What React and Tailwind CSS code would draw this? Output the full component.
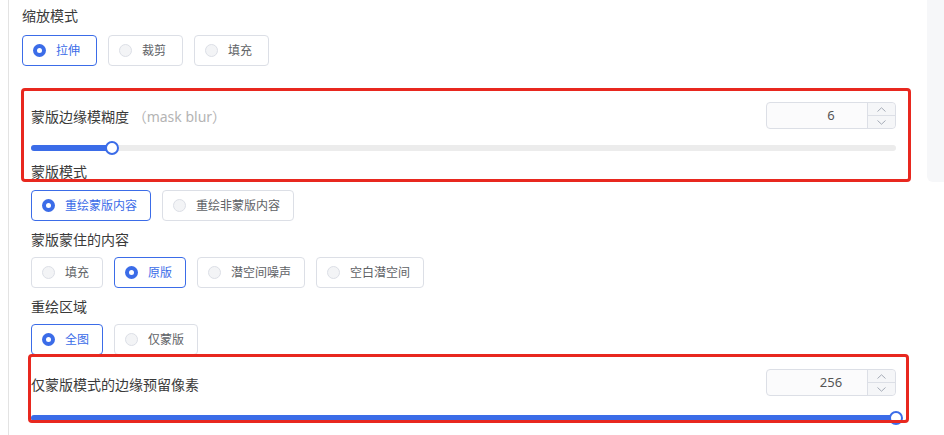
import React from "react";

const GROUPS = [
  { label: "蒙版模式", options: ["重绘蒙版内容", "重绘非蒙版内容"], selected: 0 },
  { label: "蒙版蒙住的内容", options: ["填充", "原版", "潜空间噪声", "空白潜空间"], selected: 1 },
  { label: "重绘区域", options: ["全图", "仅蒙版"], selected: 0 },
];

function RadioButton({ text, checked, wide }) {
  return (
    <div
      className={`h-[31px] flex items-center pl-[10px] gap-[10px] rounded-[4px] border ${
        wide ? "pr-[16px]" : "pr-[13px]"
      } ${checked ? "border-[#3b6ce8]" : "border-[#dcdfe6]"}`}
    >
      {checked ? (
        <span className="w-[13px] h-[13px] rounded-full bg-[#3b6ce8] flex items-center justify-center">
          <span className="w-[5px] h-[5px] rounded-full bg-white" />
        </span>
      ) : (
        <span className="w-[13px] h-[13px] rounded-full border border-[#dcdfe6] bg-[#f3f4f6]" />
      )}
      <span
        className={`text-[12px] leading-[16px] ${checked ? "text-[#3b6ce8]" : "text-[#606266]"}`}
      >
        {text}
      </span>
    </div>
  );
}

function RadioRow({ options, selected, wide }) {
  return (
    <div className="flex gap-[11px]">
      {options.map((opt, i) => (
        <RadioButton key={opt} text={opt} checked={i === selected} wide={wide} />
      ))}
    </div>
  );
}

function Label({ children, className = "" }) {
  return (
    <div className={`h-[20px] text-[14px] leading-[20px] text-[#3a3a3a] ${className}`}>{children}</div>
  );
}

function Chevron({ up }) {
  return (
    <svg width="9" height="5" viewBox="0 0 9 5" fill="none">
      <path
        d={up ? "M0.5 4.5L4.5 0.8L8.5 4.5" : "M0.5 0.5L4.5 4.2L8.5 0.5"}
        stroke="#9ca3af"
        strokeWidth="0.9"
      />
    </svg>
  );
}

function NumberInput({ value }) {
  return (
    <div className="w-[130px] h-[27px] flex rounded-[4px] border border-[#dcdfe6] bg-[#fbfbfc]">
      <div className="flex-1 flex items-center justify-center pl-[28px] text-[13px] text-[#555]">
        {value}
      </div>
      <div className="w-[28px] flex flex-col border-l border-[#dcdfe6] bg-[#f5f6f8] rounded-r-[4px]">
        <div className="flex-1 flex items-center justify-center border-b border-[#dcdfe6]">
          <Chevron up />
        </div>
        <div className="flex-1 flex items-center justify-center">
          <Chevron />
        </div>
      </div>
    </div>
  );
}

function Slider({ value, max, className = "" }) {
  const pct = (value / max) * 100;
  return (
    <div className={`relative h-[6px] rounded-full bg-[#ececec] ${className}`}>
      <div className="h-full rounded-full bg-[#3b6ce8]" style={{ width: `${pct}%` }} />
      <div
        className="absolute top-1/2 w-[14px] h-[14px] -translate-x-1/2 -translate-y-1/2 rounded-full border-2 border-[#3b6ce8] bg-white"
        style={{ left: `${pct}%` }}
      />
    </div>
  );
}

export default function App() {
  return (
    <div className="relative w-[944px] h-[435px] overflow-hidden bg-white flex font-['Noto_Sans','Noto_Sans_CJK_SC',sans-serif]">
      <div className="w-[8px]" />
      <div className="w-px bg-[#e3e3e3]" />

      <div className="flex-1 pl-[13px] pt-[6px]">
        <Label>缩放模式</Label>
        <div className="mt-[9px]">
          <RadioRow options={["拉伸", "裁剪", "填充"]} selected={0} wide />
        </div>

        <div className="ml-[9px] mr-[31px]">
          <div className="mt-[36px] h-[27px] flex items-center justify-between">
            <div className="mt-[3px] text-[14px] leading-[20px] text-[#3a3a3a]">
              蒙版边缘模糊度
              <span className="text-[#b4b4b4]"> （mask blur）</span>
            </div>
            <NumberInput value={6} />
          </div>
          <Slider value={6} max={64} className="mt-[16px]" />

          {GROUPS.map((g, i) => (
            <div key={g.label}>
              <Label className={i === 0 ? "mt-[11px]" : "mt-[9px]"}>{g.label}</Label>
              <div className={i === 0 ? "mt-[8px]" : "mt-[7px]"}>
                <RadioRow options={g.options} selected={g.selected} />
              </div>
            </div>
          ))}

          <div className="mt-[14px] h-[27px] flex items-center justify-between">
            <div className="mt-[5px] text-[14px] leading-[20px] text-[#3a3a3a]">仅蒙版模式的边缘预留像素</div>
            <NumberInput value={256} />
          </div>
          <Slider value={256} max={256} className="mt-[19px]" />
        </div>
      </div>

      <div className="w-[17px]">
        <div className="h-[182px] bg-[#f6f7f9] rounded-bl-[6px]" />
      </div>

      {/* annotation boxes drawn over the form */}
      <div className="absolute left-[21px] top-[88px] w-[890px] h-[94px] rounded-[4px] border-[3px] border-[#e8281f]" />
      <div className="absolute left-[28px] top-[354px] w-[881px] h-[69px] rounded-[4px] border-[3px] border-[#e8281f]" />
    </div>
  );
}
